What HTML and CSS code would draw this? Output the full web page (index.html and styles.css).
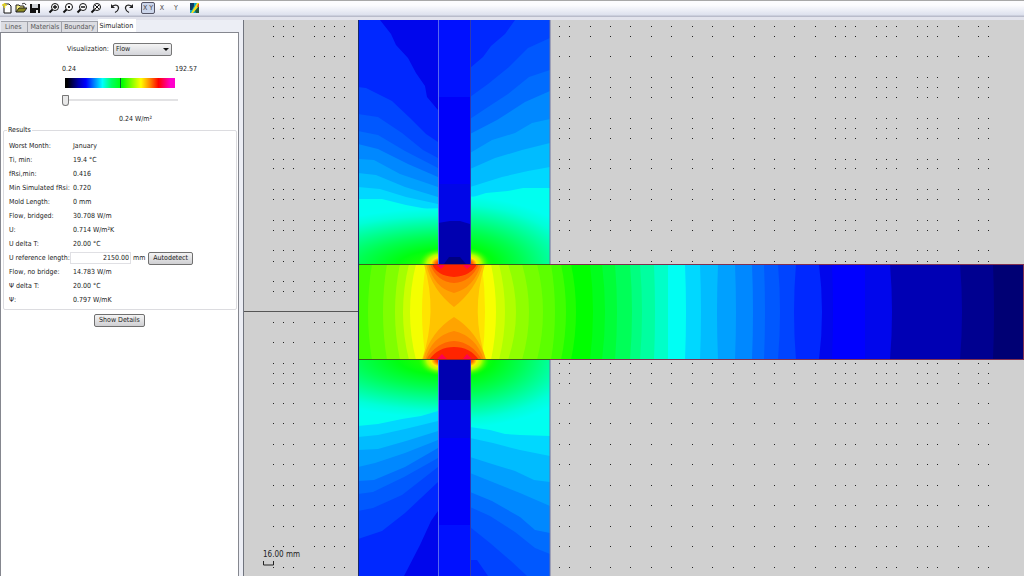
FILE: index.html
```html
<!DOCTYPE html>
<html lang="en">
<head>
<meta charset="UTF-8" />
<meta name="viewport" content="width=device-width, initial-scale=1" />
<title>Thermal Bridge Simulation</title>
<link rel="stylesheet" href="styles.css">
</head>
<body>
  <header class="toolbar" role="toolbar" aria-label="Main toolbar">
    <button class="tool" aria-label="New" title="New">
      <svg viewBox="0 0 12 12"><path d="M3 2h5l2 2v7H3z" fill="#fff" stroke="#111"/><path d="M1 3h5M3.500 1v5" stroke="#e0d020" stroke-width="1.500"/></svg>
    </button>
    <button class="tool" aria-label="Open" title="Open">
      <svg viewBox="0 0 12 12"><path d="M1 10V3h3l1 1h4v2" fill="#f6ec80" stroke="#222"/><path d="M1 10l3-4h8l-3 4z" fill="#8b8a20" stroke="#222"/><path d="M7 2c2-1 3-1 4 1" fill="none" stroke="#222"/></svg>
    </button>
    <button class="tool" aria-label="Save" title="Save">
      <svg viewBox="0 0 12 12"><path d="M1 2h10v9H1z" fill="#111"/><path d="M3 2h6v4H3z" fill="#cfd3d8"/><path d="M7 8h2v3H7z" fill="#eee"/></svg>
    </button>
    <span class="gap"></span>
    <button class="tool" aria-label="Zoom in" title="Zoom in">
      <svg viewBox="0 0 12 12"><circle cx="7" cy="5" r="3.500" fill="#fff" stroke="#111"/><path d="M5 5h4M7 3v4" stroke="#111" stroke-width="1.300"/><path d="M4.500 7.500L1.500 10.500" stroke="#111" stroke-width="2"/></svg>
    </button>
    <button class="tool" aria-label="Zoom window" title="Zoom window">
      <svg viewBox="0 0 12 12"><circle cx="7" cy="5" r="3.500" fill="#fff" stroke="#111"/><path d="M6 4h2v2H6z" fill="#111"/><path d="M4.500 7.500L1.500 10.500" stroke="#111" stroke-width="2"/></svg>
    </button>
    <button class="tool" aria-label="Zoom out" title="Zoom out">
      <svg viewBox="0 0 12 12"><circle cx="7" cy="5" r="3.500" fill="#fff" stroke="#111"/><path d="M5 5h4" stroke="#111" stroke-width="1.500"/><path d="M4.500 7.500L1.500 10.500" stroke="#111" stroke-width="2"/></svg>
    </button>
    <button class="tool" aria-label="Zoom to fit" title="Zoom to fit">
      <svg viewBox="0 0 12 12"><circle cx="7" cy="5" r="3.500" fill="#fff" stroke="#111"/><path d="M5 3l4 4M9 3L5 7" stroke="#111"/><path d="M4.500 7.500L1.500 10.500" stroke="#111" stroke-width="2"/></svg>
    </button>
    <span class="gap"></span>
    <button class="tool" aria-label="Undo" title="Undo">
      <svg viewBox="0 0 12 12"><path d="M3 4.500C6 2 10 3 9.500 6.500C9.300 8 8 9.500 6 10.500" fill="none" stroke="#222" stroke-width="1.200"/><path d="M2 2v4h4z" fill="#222"/></svg>
    </button>
    <button class="tool" aria-label="Redo" title="Redo">
      <svg viewBox="0 0 12 12"><path d="M9 4.500C6 2 2 3 2.500 6.500C2.700 8 4 9.500 6 10.500" fill="none" stroke="#222" stroke-width="1.200"/><path d="M10 2v4H6z" fill="#222"/></svg>
    </button>
    <span class="gap"></span>
    <button class="tool axis pressed" title="Both axes">X Y</button>
    <button class="tool axis" title="X axis">X</button>
    <button class="tool axis" title="Y axis">Y</button>
    <span class="gap"></span>
    <button class="tool" aria-label="Simulate" title="Simulate">
      <svg viewBox="0 0 12 12"><path d="M1 1h9v10H1z" fill="#10a8c8"/><path d="M1 1h4v3L3 8H1z" fill="#103c60"/><path d="M8 1h2v3L4 11H2z" fill="#f4e31c"/><path d="M10 4v7H7l-1-2z" fill="#205838"/><path d="M9 2h1v3H8z" fill="#e05020"/></svg>
    </button>
  </header>

  <main class="workspace">
    <aside class="sidebar">
      <nav class="tabs" role="tablist">
        <button class="tab" role="tab">Lines</button>
        <button class="tab" role="tab">Materials</button>
        <button class="tab" role="tab">Boundary</button>
        <button class="tab active" role="tab" aria-selected="true">Simulation</button>
      </nav>

      <section class="panel">
        <div class="visual-row">
          <label for="visualization">Visualization:</label>
          <span class="select-wrap"><select id="visualization"><option>Flow</option><option>Temperature</option></select></span>
        </div>

        <div class="scale">
          <div class="scale-labels"><span>0.24</span><span>192.57</span></div>
          <div class="scale-bar"></div>
          <input id="level" class="level" type="range" min="0" max="100" value="0" aria-label="Flow level">
          <output for="level">0.24 W/m²</output>
        </div>

        <fieldset class="results">
          <legend>Results</legend>
          <dl>
            <dt>Worst Month:</dt><dd>January</dd>
            <dt>Ti, min:</dt><dd>19.4 °C</dd>
            <dt>fRsi,min:</dt><dd>0.416</dd>
            <dt>Min Simulated fRsi:</dt><dd>0.720</dd>
            <dt>Mold Length:</dt><dd>0 mm</dd>
            <dt>Flow, bridged:</dt><dd>30.708 W/m</dd>
            <dt>U:</dt><dd>0.714 W/m²K</dd>
            <dt>U delta T:</dt><dd>20.00 °C</dd>
            <dt><label for="ref-length">U reference length:</label></dt>
            <dd class="ref"><input id="ref-length" type="text" value="2150.00"><span>mm</span><button class="btn">Autodetect</button></dd>
            <dt>Flow, no bridge:</dt><dd>14.783 W/m</dd>
            <dt>Ψ delta T:</dt><dd>20.00 °C</dd>
            <dt>Ψ:</dt><dd>0.797 W/mK</dd>
          </dl>
        </fieldset>
        <button class="btn details">Show Details</button>
      </section>
    </aside>

    <section class="canvas" aria-label="Simulation view">
      <svg viewBox="244 20 780 556" preserveAspectRatio="xMinYMin slice">
        <defs>
          <radialGradient id="edge" gradientUnits="userSpaceOnUse" cx="0" cy="0" r="100">
            <stop offset="0" stop-color="#80ff00"/>
            <stop offset=".16" stop-color="#20ff00"/>
            <stop offset=".3" stop-color="#00ff10"/>
            <stop offset=".5" stop-color="#00ff50"/>
            <stop offset=".7" stop-color="#00ff98"/>
            <stop offset=".88" stop-color="#00ffd8"/>
            <stop offset="1" stop-color="#00fff0"/>
          </radialGradient>
          <radialGradient id="corner">
            <stop offset="0" stop-color="#ff1000"/>
            <stop offset=".22" stop-color="#ff7000"/>
            <stop offset=".4" stop-color="#ffec00"/>
            <stop offset=".6" stop-color="#b0ff00"/>
            <stop offset="1" stop-color="#20ff00" stop-opacity="0"/>
          </radialGradient>
          <clipPath id="left-top"><path d="M358 20h80v244h-80z"/></clipPath>
          <clipPath id="right-top"><path d="M470 20h80v244h-80z"/></clipPath>
          <clipPath id="left-bottom"><path d="M358 360h80v216h-80z"/></clipPath>
          <clipPath id="right-bottom"><path d="M470 360h80v216h-80z"/></clipPath>
          <clipPath id="slab"><path d="M358 264h666v96H358z"/></clipPath>
        </defs>

        <path id="grid" class="grid"/>
        <path d="M244 311.500h114" stroke="#555"/>

        <!-- wall above the slab -->
        <g clip-path="url(#left-top)">
          <path d="M358 20h80v244h-80z" fill="#0028ff"/>
          <path d="M380 20L391 34L396 45L408 58L416 73L425 86L427 97L438 110V20z" fill="#0006ec"/>
          <path d="M358 87L366 88L392 101L410 118L426 134L438 142V264H358z" fill="#0044ff"/>
          <path d="M358 114L378 117L402 133L423 150L438 158V264H358z" fill="#0058ff"/>
          <path d="M358 131L378 135L405 151L438 168V264H358z" fill="#006cff"/>
          <path d="M358 144L378 149L408 164L438 177V264H358z" fill="#0088ff"/>
          <path d="M358 159L374 160L400 174L438 187V264H358z" fill="#00a0ff"/>
          <path d="M358 173L376 175L405 187L438 197V264H358z" fill="#00bcff"/>
          <path d="M358 187L380 189L406 197L438 204V264H358z" fill="#00d8ff"/>
          <path d="M358 199L382 199L406 205L438 211V264H358z" fill="#00fff0"/>
          <ellipse rx="100" ry="100" fill="url(#edge)" transform="translate(454 266) scale(1.900 .58)"/>
          <ellipse cx="440" cy="264" rx="22" ry="16" fill="url(#corner)"/>
        </g>
        <g clip-path="url(#right-top)">
          <path d="M470 20h80v244h-80z" fill="#0028ff"/>
          <path d="M470 68L483 57L491 46L505 34L515 20H550V264H470z" fill="#0044ff"/>
          <path d="M470 97L488 84L509 67L528 48L550 38V264H470z" fill="#0058ff"/>
          <path d="M470 119L488 107L508 94L529 77L550 70V264H470z" fill="#006cff"/>
          <path d="M470 134L497 120L525 102L550 91V264H470z" fill="#0088ff"/>
          <path d="M470 153L492 140L515 133L532 123L550 119V264H470z" fill="#00a0ff"/>
          <path d="M470 169L495 158L522 150L550 143V264H470z" fill="#00bcff"/>
          <path d="M470 187L502 177L528 171L550 167V264H470z" fill="#00d8ff"/>
          <path d="M470 198L486 193L508 191L523 188H550V264H470z" fill="#00fff0"/>
          <ellipse rx="100" ry="100" fill="url(#edge)" transform="translate(454 266) scale(1.350 .7)"/>
          <ellipse cx="468" cy="264" rx="22" ry="16" fill="url(#corner)"/>
        </g>

        <!-- wall below the slab -->
        <g clip-path="url(#left-bottom)">
          <path d="M358 360h80v216h-80z" fill="#00fff0"/>
          <ellipse rx="100" ry="100" fill="url(#edge)" transform="translate(454 358) scale(1.900 .6)"/>
          <ellipse cx="440" cy="360" rx="22" ry="16" fill="url(#corner)"/>
          <path d="M358 426L378 424L402 419L421 416L438 411V576H358z" fill="#00d8ff"/>
          <path d="M358 437L378 435L405 429L438 421V576H358z" fill="#00bcff"/>
          <path d="M358 450L378 449L406 441L438 431V576H358z" fill="#00a0ff"/>
          <path d="M358 467L375 463L405 453L438 440V576H358z" fill="#0088ff"/>
          <path d="M358 481L374 480L405 467L438 448V576H358z" fill="#006cff"/>
          <path d="M358 494L373 492L404 477L438 458V576H358z" fill="#0058ff"/>
          <path d="M358 511L373 508L402 495L438 467V576H358z" fill="#0044ff"/>
          <path d="M358 539L382 531L405 513L438 482V576H358z" fill="#0028ff"/>
          <path d="M438 511L431 521L420 545L404 576H438z" fill="#0006ec"/>
        </g>
        <g clip-path="url(#right-bottom)">
          <path d="M470 360h80v216h-80z" fill="#00fff0"/>
          <ellipse rx="100" ry="100" fill="url(#edge)" transform="translate(454 358) scale(1.350 .7)"/>
          <ellipse cx="468" cy="360" rx="22" ry="16" fill="url(#corner)"/>
          <path d="M470 427L490 430L505 434L520 435L550 436V576H470z" fill="#00d8ff"/>
          <path d="M470 438L493 443L520 450L550 456V576H470z" fill="#00bcff"/>
          <path d="M470 457L492 464L515 471L534 480L550 482V576H470z" fill="#00a0ff"/>
          <path d="M470 473L495 483L520 493L550 506V576H470z" fill="#0088ff"/>
          <path d="M470 492L492 501L520 517L535 530L550 533V576H470z" fill="#006cff"/>
          <path d="M470 507L490 516L515 532L535 548L550 554V576H470z" fill="#0058ff"/>
          <path d="M470 527L490 543L511 561L527 576H470z" fill="#0044ff"/>
          <path d="M470 560H477L488 576H470z" fill="#0028ff"/>
        </g>

        <!-- core of the wall -->
        <path d="M438 20h32v77h-32z" fill="#0010ff"/>
        <path d="M438 97h32v87h-32z" fill="#0000fa"/>
        <path d="M438 184h32v40h-32z" fill="#0006e8"/>
        <path d="M438 223L450 221H460L470 224V264H438z" fill="#0000b0"/>
        <path d="M444 264L449 257H460L466 264z" fill="#000080"/>
        <path d="M438 360h32v41h-32z" fill="#0000b0"/>
        <path d="M438 400h32v39h-32z" fill="#0006e8"/>
        <path d="M438 438h32v87h-32z" fill="#0000fa"/>
        <path d="M438 525h32v51h-32z" fill="#0010ff"/>
        <path d="M438.500 20V264M438.500 360V576" stroke="#5868f0"/>
        <path d="M470.500 20V264M470.500 360V576" stroke="#3038b0"/>

        <!-- slab -->
        <g clip-path="url(#slab)">
          <g id="bands"></g>
          <path d="M424 264Q438 312 422 360H486Q470 312 485 264z" fill="#ffc400"/>
          <path d="M426 264Q432 290 454 307Q476 290 483 264zM423 360Q430 332 454 317Q478 332 486 360z" fill="#ffa400"/>
          <path d="M428 264Q434 288 454 293Q474 288 481 264zM425 360Q432 336 454 331Q476 336 484 360z" fill="#ff8800"/>
          <path d="M430 264Q437 282 454 283Q471 282 479 264zM426 360Q436 342 454 341Q472 342 482 360z" fill="#ff6400"/>
          <path d="M432 264Q437 276 454 277Q471 276 477 264zM429 360Q438 347 454 347Q470 347 479 360z" fill="#ff2400"/>
          <path d="M436 264h10l-5 5zM462 264h11l-6 5zM436 360h12l-6-6zM462 360h11l-6-6z" fill="#ff0050"/>
        </g>
        <path d="M358 264.500H550M358 359.500H550" stroke="#38601c"/>
        <path d="M434 264.500H476M434 359.500H476" stroke="#a02020"/>
        <path d="M550 264.500H1024M550 359.500H1024M1023.500 264V360" stroke="#803050"/>
        <path d="M358.500 20V576" stroke="#182868"/>
        <path d="M550 20V264M550 360V576" stroke="#6a70a0"/>

        <text x="263" y="557" class="scale-text">16.00 mm</text>
        <path d="M263.500 561v4h10v-4" fill="none" stroke="#222"/>
      </svg>
    </section>
  </main>

<script>
  // Snapped grid positions, in drawing units
  const gridX = [273, 283, 293, 314, 324, 334, 344, 559, 569, 590, 610, 630, 651, 671, 692, 712, 733,
    754, 774, 794, 815, 835, 845, 855, 876, 886, 896, 917, 927, 937, 958, 978, 988];
  const gridY = [26, 36, 56, 77, 87, 97, 118, 128, 138, 159, 168, 189, 199, 220, 230, 250, 261, 281, 291,
    322, 342, 363, 373, 383, 403, 423, 444, 464, 485, 505, 526, 546, 567];

  let dots = '';
  gridY.forEach(y => gridX.forEach(x => {
    dots += `M${x} ${y}h1v1h-1z`;
  }));
  document.getElementById('grid').setAttribute('d', dots);

  // Flow bands in the slab: start x, bend, colour
  const bands = [
    [350, 0, '#44ff00'], [372, -4, '#60ff00'], [387, -4, '#80ff00'], [400, -5, '#a4ff00'],
    [409, -6, '#ccff00'], [416, -6, '#f4ff00'], [426, -4, '#ffe400'], [454, 0, '#ffe400'],
    [482, 3, '#f8ff00'], [491, 5, '#d0ff00'], [499, 6, '#b0ff00'], [508, 8, '#90ff00'],
    [522, 7, '#74ff00'], [537, 6, '#5cff00'], [551, 4, '#40ff00'], [561, 5, '#20ff00'],
    [571, 5, '#00ff00'], [590, 3, '#00ff1c'], [602, 3, '#00ff38'], [615, 2, '#00ff58'],
    [630, 2, '#00ff80'], [640, 2, '#00ffa0'], [654, 1, '#00ffc8'], [668, 0, '#00fff4'],
    [685, 1, '#00d8ff'], [700, 1, '#00bcff'], [718, -1, '#00a0ff'], [735, 1, '#0088ff'],
    [752, 1, '#006cff'], [764, 1, '#0058ff'], [778, 2, '#0044ff'], [796, -2, '#0028ff'],
    [819, 3, '#0006ec'], [832, 1, '#0000ff'], [865, 0, '#0006ec'], [890, 2, '#0000b4'],
    [960, 2, '#000090'], [993, 1, '#000074']
  ];
  document.getElementById('bands').innerHTML = bands.map(([x, bend, fill]) =>
    `<path d="M${x} 264Q${x + bend * 2} 312 ${x} 360H1024V264z" fill="${fill}"/>`
  ).join('');
</script>
</body>
</html>
```

FILE: styles.css
```css
* {
  box-sizing: border-box;
}

body {
  margin: 0;
  height: 100vh;
  display: flex;
  flex-direction: column;
  overflow: hidden;
  background: #eceef5;
  color: #222;
  font: 7px/14px "DejaVu Sans Condensed", "DejaVu Sans", sans-serif;
}

button,
select,
input {
  font: inherit;
  color: inherit;
}

/* Toolbar */
.toolbar {
  flex: none;
  display: flex;
  align-items: center;
  height: 20px;
  padding: 0 0 4px;
  background: linear-gradient(#a8a8a8 0 1px, #fcfcfe 1px 5px, #dde1ee 15px, #b9bccb 16px 17px, #e2e3ec 17px);
}

.tool {
  width: 14px;
  height: 14px;
  padding: 1px;
  border: 0;
  background: none;
}

.tool svg {
  display: block;
  width: 12px;
  height: 12px;
}

.axis {
  padding: 0;
  line-height: 10px;
  text-align: center;
  color: #444;
}

.pressed {
  height: 12px;
  border: 1px solid #556;
  border-radius: 2px;
  background: #cbd5ea;
}

.gap {
  width: 5px;
}

/* Layout */
.workspace {
  flex: 1;
  min-height: 0;
  display: flex;
}

.sidebar {
  flex: none;
  width: 244px;
  display: flex;
  flex-direction: column;
  padding-right: 4px;
  border-right: 1px solid #70747e;
}

.canvas {
  flex: 1;
  min-width: 0;
  background: #d0d0d0;
}

.canvas svg {
  display: block;
  width: 100%;
  height: 100%;
}

.grid {
  fill: #222;
}

.scale-text {
  font: 8px "DejaVu Sans Condensed", "DejaVu Sans", sans-serif;
  fill: #222;
}

/* Tabs */
.tabs {
  display: flex;
  align-items: flex-end;
  height: 12px;
  padding-left: 1px;
}

.tab {
  height: 11px;
  padding: 0 2px;
  border: 1px solid #a0a2aa;
  border-bottom: 0;
  border-left-width: 0;
  background: #dcdde2;
  line-height: 11px;
  color: #555;
}

.tab:first-child {
  padding: 0 6px 0 4px;
}

.tab.active {
  height: 13px;
  background: #fff;
  border-color: #fff;
  color: #222;
}

.panel {
  flex: 1;
  border: 1px solid #85878f;
  border-bottom: 0;
  background: #fff;
}

/* Visualization */
.visual-row {
  display: flex;
  align-items: center;
  gap: 4px;
  padding: 9px 0 0 66px;
}

.select-wrap {
  position: relative;
  display: flex;
}

.select-wrap::after {
  content: "";
  position: absolute;
  right: 3px;
  top: 5px;
  border: 3px solid transparent;
  border-top-color: #111;
  border-bottom: 0;
}

select {
  appearance: none;
  width: 59px;
  height: 13px;
  padding: 0 2px;
  border: 1px solid #777;
  border-radius: 2px;
  background: linear-gradient(#f4f4f4, #d4d5da);
  line-height: 11px;
}

.scale {
  display: flex;
  flex-direction: column;
  width: 142px;
  margin: 6px 0 0 61px;
}

.scale-labels {
  display: flex;
  justify-content: space-between;
  width: 135px;
}

.scale-bar {
  width: 110px;
  height: 10px;
  margin: 2px 0 0 3px;
  background:
    linear-gradient(#063, #063) 55px 0 / 1px 100% no-repeat,
    linear-gradient(90deg, #000 2%, #00a 12%, #00f 19%, #0ff 34%, #0f6 42%, #0f0 52%, #ff0 69%, #f80 77%, #f00 85%, #f0c 96%);
}

.level {
  appearance: none;
  width: 116px;
  height: 12px;
  margin: 6px 0 0;
  background: linear-gradient(#e2e2e4, #e2e2e4) 0 5px / 100% 2px no-repeat;
}

.level::-webkit-slider-thumb {
  appearance: none;
  width: 7px;
  height: 11px;
  border: 1px solid #777;
  border-radius: 1px 1px 4px 4px;
  background: #e8e8e8;
}

output {
  margin: 6px 0 0 57px;
}

/* Results */
.results {
  min-width: 0;
  margin: 0 1px 0 2px;
  padding: 5px 0 2px 5px;
  border: 1px solid #dcdce0;
  border-radius: 2px;
}

.results legend {
  padding: 0 1px;
  margin-left: -2px;
  line-height: 8px;
}

dl {
  display: grid;
  grid-template-columns: 64px 1fr;
  grid-auto-rows: 14px;
  margin: 0;
}

dt {
  white-space: nowrap;
}

dd {
  margin: 0;
}

.ref {
  display: flex;
  align-items: center;
}

.ref input {
  width: 61px;
  height: 12px;
  margin-left: -3px;
  margin-right: 2px;
  padding: 0 1px;
  border: 1px solid #e0e0e4;
  text-align: right;
}

.btn {
  height: 13px;
  padding: 0 4px;
  border: 1px solid #707070;
  border-radius: 2px;
  background: linear-gradient(#f4f4f4, #cfcfd2);
  line-height: 11px;
}

.ref .btn {
  margin-left: 3px;
}

.details {
  display: block;
  margin: 4px auto 0;
}
```
